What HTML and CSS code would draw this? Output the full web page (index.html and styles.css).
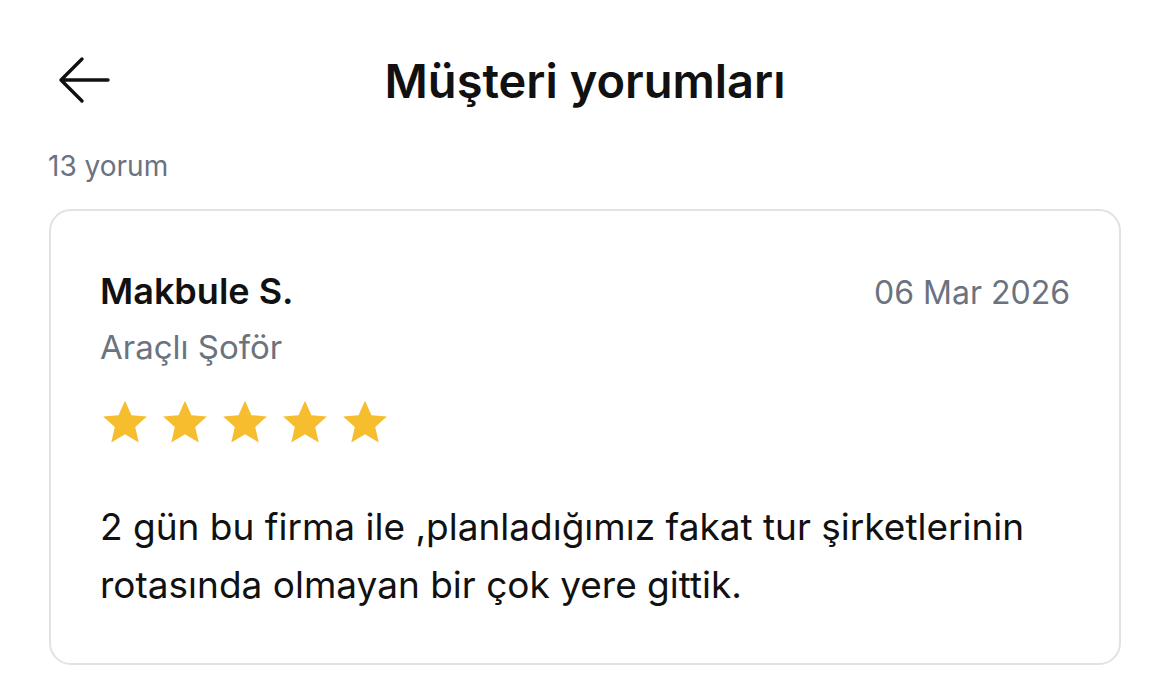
FILE: index.html
```html
<!DOCTYPE html>
<html lang="tr">
<head>
<meta charset="utf-8">
<link rel="stylesheet" href="styles.css">
</head>
<body>
<div class="page">
  <header class="topbar">
    <button class="back" aria-label="Geri">
      <svg width="52" height="48" viewBox="0 0 52 48"><path d="M50 24H4M24 3L3 24l21 21" fill="none" stroke="#111" stroke-width="3.4" stroke-linecap="round" stroke-linejoin="round"/></svg>
    </button>
    <h1 class="title">Müşteri yorumları</h1>
  </header>
  <div class="count">13 yorum</div>
  <section class="card">
    <div class="card-head">
      <div class="name">Makbule S.</div>
      <div class="date">06 Mar 2026</div>
    </div>
    <div class="service">Araçlı Şoför</div>
    <div class="stars">
      <svg class="star" viewBox="0 0 24 24"><path d="M12 1.8l3.1 6.9 7.4.7-5.6 5 1.7 7.4L12 17.9l-6.6 3.9 1.7-7.4-5.6-5 7.4-.7z"/></svg>
      <svg class="star" viewBox="0 0 24 24"><path d="M12 1.8l3.1 6.9 7.4.7-5.6 5 1.7 7.4L12 17.9l-6.6 3.9 1.7-7.4-5.6-5 7.4-.7z"/></svg>
      <svg class="star" viewBox="0 0 24 24"><path d="M12 1.8l3.1 6.9 7.4.7-5.6 5 1.7 7.4L12 17.9l-6.6 3.9 1.7-7.4-5.6-5 7.4-.7z"/></svg>
      <svg class="star" viewBox="0 0 24 24"><path d="M12 1.8l3.1 6.9 7.4.7-5.6 5 1.7 7.4L12 17.9l-6.6 3.9 1.7-7.4-5.6-5 7.4-.7z"/></svg>
      <svg class="star" viewBox="0 0 24 24"><path d="M12 1.8l3.1 6.9 7.4.7-5.6 5 1.7 7.4L12 17.9l-6.6 3.9 1.7-7.4-5.6-5 7.4-.7z"/></svg>
    </div>
    <p class="text">2 gün bu firma ile ,planladığımız fakat tur şirketlerinin rotasında olmayan bir çok yere gittik.</p>
  </section>
</div>
</body>
</html>
```
FILE: styles.css
```css
* { box-sizing: border-box; }
html, body { margin: 0; padding: 0; background: #fff; }
body { font-family: "Inter", "Noto Sans", sans-serif; color: #111; }
.page { width: 1170px; height: 697px; overflow: hidden; }
.topbar {
  position: relative;
  height: 80px;
  margin-top: 40px;
  display: flex;
  align-items: center;
  justify-content: center;
}
.back {
  position: absolute;
  left: 58px;
  top: 16px;
  padding: 0;
  border: 0;
  background: none;
  display: flex;
}
.title {
  margin: 0;
  font-size: 47px;
  font-weight: 600;
  line-height: 1;
}
.count {
  margin: 30px 0 0 48px;
  font-size: 28px;
  color: #6b7280;
  line-height: 32px;
}
.card {
  margin: 27px 49px 0 49px;
  border: 2px solid #e2e2e4;
  border-radius: 22px;
  padding: 58px 49px 0 49px;
  height: 456px;
}
.card-head {
  display: flex;
  justify-content: space-between;
  align-items: baseline;
}
.name {
  font-size: 36px;
  font-weight: 600;
  line-height: 44px;
}
.date {
  font-size: 32px;
  color: #6b7280;
}
.service {
  margin-top: 14px;
  font-size: 33px;
  color: #6b7280;
  line-height: 40px;
}
.stars {
  margin-top: 30px;
  display: flex;
  gap: 10px;
}
.star { width: 50px; height: 50px; fill: #f6bd2f; }
.text {
  margin: 51px 0 0 0;
  font-size: 37px;
  line-height: 58px;
}
```
